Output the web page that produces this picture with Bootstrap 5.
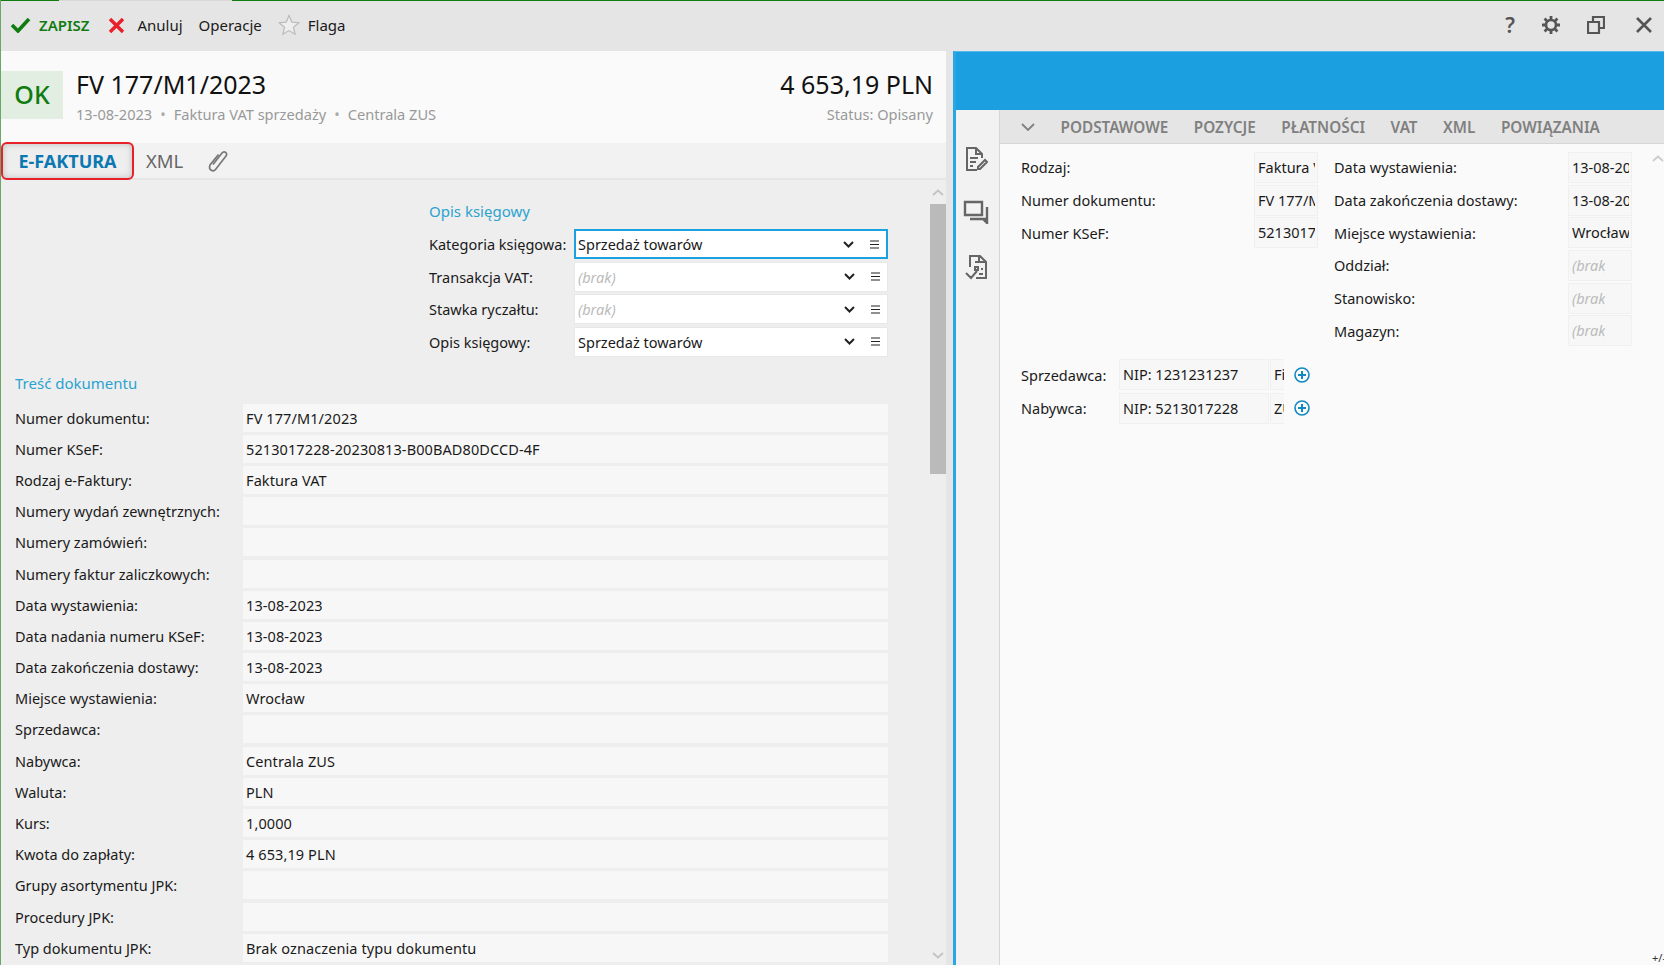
<!DOCTYPE html>
<html lang="pl">
<head>
<meta charset="UTF-8">
<title>FV 177/M1/2023</title>
<link href="https://cdn.jsdelivr.net/npm/bootstrap@5.3.0/dist/css/bootstrap.min.css" rel="stylesheet">
<style>
  html, body { height: 965px; overflow: hidden; }
  body { font-family: "Noto Sans", "Open Sans", sans-serif; font-size: 14.5px; line-height: 22px; color: #1a1a1a; background: #e5e5e5; }
  svg { display: block; flex: none; }
  .app-shell { height: 965px; border-left: 1px solid #6aa86a; }
  .top-line { height: 1px; }
  .top-line-green { background: #107c10; flex: 1; }
  .top-line-gap { background: #d8d8d8; width: 173px; }
  .top-line-start { background: #107c10; width: 58px; }
  .toolbar { height: 50px; background: #e5e5e5; padding: 0 11px 2px 9px; font-size: 15px; }
  .tool-save { color: #107c10; font-weight: 600; font-size: 15px; margin-right: 15px; }
  .tool-right { gap: 26px; }
  .tool-help { font-size: 21px; font-weight: 600; color: #555; }
  .main-split { height: 914px; }
  .left-pane { width: 945px; flex: none; }
  .doc-head { height: 92px; background: #fafafa; padding: 20px 13px 0 0; }
  .ok-box { width: 62px; height: 48px; background: #e1eee1; color: #107c10; font-size: 25px; font-weight: 500; margin-right: 13px; padding-bottom: 3px; }
  .doc-title { font-size: 25px; line-height: 30px; color: #111; margin-top: -2px; }
  .doc-sub { font-size: 14.6px; line-height: 24px; color: #999; margin-top: 3px; }
  .dot-sep { margin: 0 8px; color: #aaa; }
  .tab-strip { height: 37px; background: #f2f2f2; border-bottom: 2px solid #e6e6e6; gap: 12px; }
  .tab-active { width: 133px; height: 38px; margin-top: 1px; border: 2px solid #e8202a; border-radius: 6px; color: #0c78b2; font-weight: 700; font-size: 18px; background: #eee; box-shadow: inset 0 0 6px #bbb; z-index: 1; flex: none; }
  .tab-plain { font-size: 18.5px; color: #666; }
  .tab-clip { margin-left: 12px; }
  .left-body { height: 785px; background: #eee; overflow: hidden; }
  .form-area { flex: 1; min-width: 0; padding-top: 20px; }
  .section-title { color: #2ba3cf; font-size: 15px; line-height: 22px; }
  .opis-block { padding-left: 428px; padding-right: 42px; }
  .opis-title { margin-bottom: 6px; }
  .opis-row { height: 32.5px; }
  .opis-label { width: 145px; flex: none; }
  .pick-box { flex: 1; height: 30px; background: #fff; border: 1px solid #e8e8e8; padding-left: 3px; }
  .pick-focus { border: 2px solid #1ba1e2; padding-left: 2px; }
  .pick-empty { color: #bbb; font-style: italic; }
  .pick-text { flex: 1; }
  .pick-chevron { margin-right: 16px; }
  .pick-menu { margin-right: 7px; }
  .tresc-block { padding: 14px 42px 0 14px; }
  .tresc-title { margin-bottom: 8px; }
  .tresc-row { height: 31.2px; }
  .tresc-label { width: 228px; flex: none; }
  .tresc-value { flex: 1; height: 28px; background: #f7f7f7; padding-left: 3px; line-height: 28px; letter-spacing: .1px; }
  .scroll-col { width: 16px; flex: none; }
  .scroll-thumb { height: 270px; background: #bababa; margin-top: 8px; }
  .scroll-down { margin-top: 478px; }
  .scroll-up { margin-top: 9px; }
  .gutter { width: 7px; flex: none; background: #e5e5e5; }
  .right-pane { flex: 1; min-width: 0; border-left: 3px solid #2aa5e6; border-top: 1px solid #59b9ea; background: #fafafa; }
  .blue-band { height: 58px; background: #1b9fe0; flex: none; }
  .right-body { flex: 1; min-height: 0; }
  .side-rail { width: 44px; flex: none; background: #f2f2f2; border-right: 1px solid #d6d6d6; padding: 36px 3px 0 0; gap: 27px; }
  .rail-last { margin-top: 3px; }
  .right-main { flex: 1; min-width: 0; }
  .sub-tabs { height: 34px; background: #e5e5e5; border-bottom: 1px solid #d6d6d6; padding-left: 21px; gap: 25.500px; color: #808080; font-weight: 600; font-size: 15.300px; flex: none; }
  .fields-wrap { padding: 7px 0 0 21px; position: relative; flex: 1; }
  .fields-col-a { width: 313px; flex: none; }
  .fields-col-b { width: 298px; flex: none; }
  .fld-row { height: 32.7px; }
  .fld-label { flex: 1; }
  .fld-value { width: 64px; height: 31px; background: #f7f7f7; border: 1px solid #f0f0f0; padding-left: 3px; overflow: hidden; white-space: nowrap; line-height: 29px; flex: none; }
  .fld-clip { width: 57px; overflow: hidden; }
  .fld-clip-short { width: 33px; overflow: hidden; color: #bbb; font-style: italic; }
  .party-block { margin-top: 11px; }
  .party-row { height: 33.5px; }
  .party-label { width: 98px; flex: none; }
  .party-nip { width: 150px; height: 31px; background: #f7f7f7; border: 1px solid #f0f0f0; padding-left: 3px; line-height: 29px; flex: none; }
  .party-name { width: 14px; height: 31px; background: #f7f7f7; border: 1px solid #f0f0f0; border-right: 0; padding-left: 3px; line-height: 29px; overflow: hidden; flex: none; margin-right: 10px; margin-left: 1px; }
  .scroll-hint { position: absolute; right: 0; top: 11px; }
  .plus-minus { position: absolute; right: -2px; bottom: 1px; font-size: 11px; line-height: 12px; color: #333; white-space: nowrap; }
</style>
</head>
<body>
<div class="app-shell d-flex flex-column">
  <div class="d-flex">
    <div class="top-line top-line-start"></div>
    <div class="top-line top-line-gap"></div>
    <div class="top-line top-line-green"></div>
  </div>

  <div class="toolbar d-flex align-items-center">
    <svg width="21" height="16" viewBox="0 0 21 16" class="me-2"><path d="M2 8l6 6L19 2" fill="none" stroke="#107c10" stroke-width="3.6"/></svg>
    <span class="tool-save">ZAPISZ</span>
    <svg width="17" height="17" viewBox="0 0 17 17" class="ms-1 me-2"><path d="M2 2l13 13M15 2L2 15" fill="none" stroke="#e8202a" stroke-width="3.4"/></svg>
    <span class="ms-1 me-3">Anuluj</span>
    <span class="me-3">Operacje</span>
    <svg width="22" height="22" viewBox="0 0 22 22" class="me-2"><path d="M11 1.5l2.8 6.6 7 .6-5.3 4.6 1.6 7L11 16.6l-6.1 3.7 1.6-7L1.2 8.7l7-.6z" fill="#eee" stroke="#bbb" stroke-width="1.2"/></svg>
    <span>Flaga</span>
    <div class="ms-auto d-flex align-items-center tool-right">
      <span class="tool-help">?</span>
      <svg width="20" height="20" viewBox="0 0 20 20"><circle cx="10" cy="10" r="5" fill="none" stroke="#555" stroke-width="2.6"/><path d="M10 1v4M10 15v4M1 10h4M15 10h4M3.6 3.6l2.8 2.8M13.6 13.6l2.8 2.8M16.4 3.6l-2.8 2.8M6.4 13.6l-2.8 2.8" stroke="#555" stroke-width="2.8"/></svg>
      <svg width="18" height="18" viewBox="0 0 18 18"><path d="M1 6h11v11H1zM6 6V1h11v11h-5" fill="none" stroke="#555" stroke-width="2.2"/></svg>
      <svg width="18" height="18" viewBox="0 0 18 18" class="ms-1"><path d="M2 2l14 14M16 2L2 16" fill="none" stroke="#555" stroke-width="2.6"/></svg>
    </div>
  </div>

  <div class="main-split d-flex">
    <div class="left-pane d-flex flex-column">
      <div class="doc-head d-flex">
        <div class="ok-box d-flex align-items-center justify-content-center">OK</div>
        <div>
          <div class="doc-title">FV 177/M1/2023</div>
          <div class="doc-sub">13-08-2023<span class="dot-sep">•</span>Faktura VAT sprzedaży<span class="dot-sep">•</span>Centrala ZUS</div>
        </div>
        <div class="ms-auto text-end">
          <div class="doc-title">4 653,19 PLN</div>
          <div class="doc-sub">Status: Opisany</div>
        </div>
      </div>

      <div class="tab-strip d-flex align-items-center">
        <div class="tab-active d-flex align-items-center justify-content-center">E-FAKTURA</div>
        <span class="tab-plain">XML</span>
        <svg class="tab-clip" width="22" height="24" viewBox="0 0 22 24"><path d="M6 15.500L15 4c2.200-2.800 6.200.2 4 3L8.500 20.500c-2 2.500-7.500 1-5.500-4.500L11.500 5.500" fill="none" stroke="#777" stroke-width="1.700"/></svg>
      </div>

      <div class="left-body d-flex">
        <div class="form-area">
          <div class="opis-block">
            <div class="section-title opis-title">Opis księgowy</div>
            <div class="opis-row d-flex align-items-center">
              <span class="opis-label">Kategoria księgowa:</span>
              <div class="pick-box pick-focus d-flex align-items-center">
                <span class="pick-text">Sprzedaż towarów</span>
                <svg class="pick-chevron" width="11" height="7" viewBox="0 0 11 7"><path d="M1 1l4.500 4.500L10 1" fill="none" stroke="#222" stroke-width="2"/></svg>
                <svg class="pick-menu" width="9" height="9" viewBox="0 0 9 9"><path d="M0 1h9M0 4.500h9M0 8h9" stroke="#222" stroke-width="1.100"/></svg>
              </div>
            </div>
            <div class="opis-row d-flex align-items-center">
              <span class="opis-label">Transakcja VAT:</span>
              <div class="pick-box d-flex align-items-center">
                <span class="pick-text pick-empty">(brak)</span>
                <svg class="pick-chevron" width="11" height="7" viewBox="0 0 11 7"><path d="M1 1l4.500 4.500L10 1" fill="none" stroke="#222" stroke-width="2"/></svg>
                <svg class="pick-menu" width="9" height="9" viewBox="0 0 9 9"><path d="M0 1h9M0 4.500h9M0 8h9" stroke="#222" stroke-width="1.100"/></svg>
              </div>
            </div>
            <div class="opis-row d-flex align-items-center">
              <span class="opis-label">Stawka ryczałtu:</span>
              <div class="pick-box d-flex align-items-center">
                <span class="pick-text pick-empty">(brak)</span>
                <svg class="pick-chevron" width="11" height="7" viewBox="0 0 11 7"><path d="M1 1l4.500 4.500L10 1" fill="none" stroke="#222" stroke-width="2"/></svg>
                <svg class="pick-menu" width="9" height="9" viewBox="0 0 9 9"><path d="M0 1h9M0 4.500h9M0 8h9" stroke="#222" stroke-width="1.100"/></svg>
              </div>
            </div>
            <div class="opis-row d-flex align-items-center">
              <span class="opis-label">Opis księgowy:</span>
              <div class="pick-box d-flex align-items-center">
                <span class="pick-text">Sprzedaż towarów</span>
                <svg class="pick-chevron" width="11" height="7" viewBox="0 0 11 7"><path d="M1 1l4.500 4.500L10 1" fill="none" stroke="#222" stroke-width="2"/></svg>
                <svg class="pick-menu" width="9" height="9" viewBox="0 0 9 9"><path d="M0 1h9M0 4.500h9M0 8h9" stroke="#222" stroke-width="1.100"/></svg>
              </div>
            </div>
          </div>

          <div class="tresc-block">
            <div class="section-title tresc-title">Treść dokumentu</div>
            <div class="tresc-row d-flex align-items-center"><span class="tresc-label">Numer dokumentu:</span><div class="tresc-value">FV 177/M1/2023</div></div>
            <div class="tresc-row d-flex align-items-center"><span class="tresc-label">Numer KSeF:</span><div class="tresc-value">5213017228-20230813-B00BAD80DCCD-4F</div></div>
            <div class="tresc-row d-flex align-items-center"><span class="tresc-label">Rodzaj e-Faktury:</span><div class="tresc-value">Faktura VAT</div></div>
            <div class="tresc-row d-flex align-items-center"><span class="tresc-label">Numery wydań zewnętrznych:</span><div class="tresc-value"></div></div>
            <div class="tresc-row d-flex align-items-center"><span class="tresc-label">Numery zamówień:</span><div class="tresc-value"></div></div>
            <div class="tresc-row d-flex align-items-center"><span class="tresc-label">Numery faktur zaliczkowych:</span><div class="tresc-value"></div></div>
            <div class="tresc-row d-flex align-items-center"><span class="tresc-label">Data wystawienia:</span><div class="tresc-value">13-08-2023</div></div>
            <div class="tresc-row d-flex align-items-center"><span class="tresc-label">Data nadania numeru KSeF:</span><div class="tresc-value">13-08-2023</div></div>
            <div class="tresc-row d-flex align-items-center"><span class="tresc-label">Data zakończenia dostawy:</span><div class="tresc-value">13-08-2023</div></div>
            <div class="tresc-row d-flex align-items-center"><span class="tresc-label">Miejsce wystawienia:</span><div class="tresc-value">Wrocław</div></div>
            <div class="tresc-row d-flex align-items-center"><span class="tresc-label">Sprzedawca:</span><div class="tresc-value"></div></div>
            <div class="tresc-row d-flex align-items-center"><span class="tresc-label">Nabywca:</span><div class="tresc-value">Centrala ZUS</div></div>
            <div class="tresc-row d-flex align-items-center"><span class="tresc-label">Waluta:</span><div class="tresc-value">PLN</div></div>
            <div class="tresc-row d-flex align-items-center"><span class="tresc-label">Kurs:</span><div class="tresc-value">1,0000</div></div>
            <div class="tresc-row d-flex align-items-center"><span class="tresc-label">Kwota do zapłaty:</span><div class="tresc-value">4 653,19 PLN</div></div>
            <div class="tresc-row d-flex align-items-center"><span class="tresc-label">Grupy asortymentu JPK:</span><div class="tresc-value"></div></div>
            <div class="tresc-row d-flex align-items-center"><span class="tresc-label">Procedury JPK:</span><div class="tresc-value"></div></div>
            <div class="tresc-row d-flex align-items-center"><span class="tresc-label">Typ dokumentu JPK:</span><div class="tresc-value">Brak oznaczenia typu dokumentu</div></div>
          </div>
        </div>

        <div class="scroll-col">
          <svg class="scroll-up mx-auto" width="12" height="7" viewBox="0 0 12 7"><path d="M1 6l5-4.500L11 6" fill="none" stroke="#c4c4c4" stroke-width="2"/></svg>
          <div class="scroll-thumb"></div>
          <svg class="scroll-down mx-auto" width="12" height="7" viewBox="0 0 12 7"><path d="M1 1l5 4.500L11 1" fill="none" stroke="#c4c4c4" stroke-width="2"/></svg>
        </div>
      </div>
    </div>

    <div class="gutter"></div>

    <div class="right-pane d-flex flex-column">
      <div class="blue-band"></div>
      <div class="right-body d-flex">
        <div class="side-rail d-flex flex-column align-items-center">
          <svg width="24" height="26" viewBox="0 0 24 26"><path d="M13 24H3V2h9l6 6v4M12 2v6h6M6 12h8M6 16h6M6 20h3M14 21l7-7 2 2-7 7h-2z" fill="none" stroke="#666" stroke-width="2"/></svg>
          <svg width="26" height="25" viewBox="0 0 26 25"><path d="M2 3h17v13H2zM7 20h17V8M24 19v5l-4-4" fill="none" stroke="#666" stroke-width="2.400"/></svg>
          <svg class="rail-last" width="24" height="27" viewBox="0 0 24 27"><path d="M6 13V2h10l6 6v16H12M15 2v6h7M11 8h3M11 13h3v3h-3zM17 15h2M15 20h4M2 19l5 5 6-7" fill="none" stroke="#666" stroke-width="2"/></svg>
        </div>
        <div class="right-main d-flex flex-column">
          <div class="sub-tabs d-flex align-items-center">
            <svg width="14" height="8" viewBox="0 0 14 8"><path d="M1 1l6 6 6-6" fill="none" stroke="#808080" stroke-width="1.800"/></svg>
            <span>PODSTAWOWE</span><span>POZYCJE</span><span>PŁATNOŚCI</span><span>VAT</span><span>XML</span><span>POWIĄZANIA</span>
          </div>
          <div class="fields-wrap">
            <svg class="scroll-hint" width="12" height="7" viewBox="0 0 12 7"><path d="M1 6l5-4.500L11 6" fill="none" stroke="#ccc" stroke-width="1.800"/></svg>
            <div class="d-flex">
              <div class="fields-col-a pe-3">
                <div class="fld-row d-flex align-items-center"><span class="fld-label">Rodzaj:</span><div class="fld-value"><div class="fld-clip">Faktura VAT</div></div></div>
                <div class="fld-row d-flex align-items-center"><span class="fld-label">Numer dokumentu:</span><div class="fld-value"><div class="fld-clip">FV 177/M1/2023</div></div></div>
                <div class="fld-row d-flex align-items-center"><span class="fld-label">Numer KSeF:</span><div class="fld-value"><div class="fld-clip">5213017228</div></div></div>
              </div>
              <div class="fields-col-b">
                <div class="fld-row d-flex align-items-center"><span class="fld-label">Data wystawienia:</span><div class="fld-value"><div class="fld-clip">13-08-2023</div></div></div>
                <div class="fld-row d-flex align-items-center"><span class="fld-label">Data zakończenia dostawy:</span><div class="fld-value"><div class="fld-clip">13-08-2023</div></div></div>
                <div class="fld-row d-flex align-items-center"><span class="fld-label">Miejsce wystawienia:</span><div class="fld-value"><div class="fld-clip">Wrocław</div></div></div>
                <div class="fld-row d-flex align-items-center"><span class="fld-label">Oddział:</span><div class="fld-value"><div class="fld-clip-short">(brak)</div></div></div>
                <div class="fld-row d-flex align-items-center"><span class="fld-label">Stanowisko:</span><div class="fld-value"><div class="fld-clip-short">(brak)</div></div></div>
                <div class="fld-row d-flex align-items-center"><span class="fld-label">Magazyn:</span><div class="fld-value"><div class="fld-clip-short">(brak)</div></div></div>
              </div>
            </div>
            <div class="party-block">
              <div class="party-row d-flex align-items-center">
                <span class="party-label">Sprzedawca:</span><div class="party-nip">NIP: 1231231237</div><div class="party-name">Firma</div>
                <svg width="16" height="16" viewBox="0 0 16 16"><circle cx="8" cy="8" r="7" fill="none" stroke="#1088c0" stroke-width="1.600"/><path d="M8 4v8M4 8h8" stroke="#1088c0" stroke-width="2"/></svg>
              </div>
              <div class="party-row d-flex align-items-center">
                <span class="party-label">Nabywca:</span><div class="party-nip">NIP: 5213017228</div><div class="party-name">ZUS</div>
                <svg width="16" height="16" viewBox="0 0 16 16"><circle cx="8" cy="8" r="7" fill="none" stroke="#1088c0" stroke-width="1.600"/><path d="M8 4v8M4 8h8" stroke="#1088c0" stroke-width="2"/></svg>
              </div>
            </div>
            <span class="plus-minus">+/-</span>
          </div>
        </div>
      </div>
    </div>
  </div>
</div>
<script src="https://cdn.jsdelivr.net/npm/bootstrap@5.3.0/dist/js/bootstrap.bundle.min.js"></script>
</body>
</html>
